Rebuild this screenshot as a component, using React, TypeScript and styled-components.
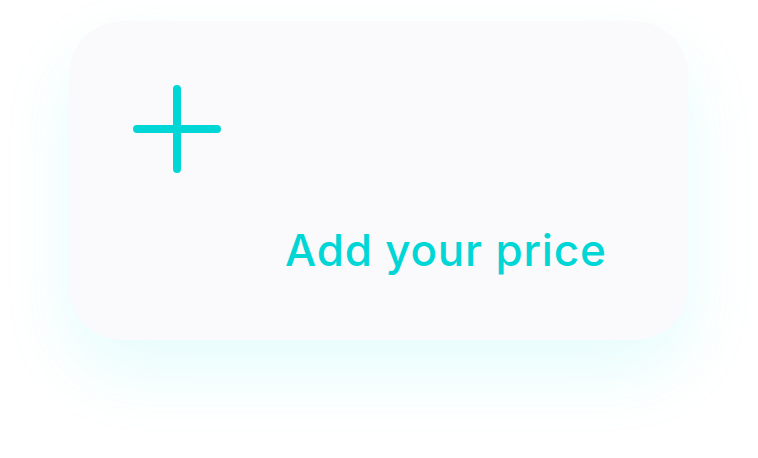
import React from "react";
import styled, { createGlobalStyle } from "styled-components";

const Global = createGlobalStyle`
  html, body { margin: 0; padding: 0; background: #ffffff; }
  body { width: 758px; height: 458px; overflow: hidden; }
`;

const Page = styled.div`
  width: 758px;
  height: 458px;
  box-sizing: border-box;
  padding: 21px 0 0 69px;
`;

const Card = styled.button`
  all: unset;
  box-sizing: border-box;
  width: 619px;
  height: 319px;
  border-radius: 54px;
  background: #faf9fc;
  box-shadow: 0 32px 70px rgba(0, 222, 222, 0.1);
  display: grid;
  grid-template-rows: auto 1fr;
  padding: 64px 0 0 64px;
  cursor: pointer;
`;

const PlusIcon = styled.svg`
  display: block;
  width: 88px;
  height: 88px;
`;

const Label = styled.span`
  justify-self: start;
  margin: 55px 0 0 152px;
  font-family: Inter, "Noto Sans", sans-serif;
  font-size: 44px;
  font-weight: 500;
  letter-spacing: 0.8px;
  color: #00d6d6;
  line-height: 1;
`;

export default function App() {
  return (
    <>
      <Global />
      <Page>
        <Card>
          <PlusIcon viewBox="0 0 88 88" aria-hidden>
            <path
              d="M44 4V84M4 44H84"
              stroke="#00d6d6"
              strokeWidth="8"
              strokeLinecap="round"
              fill="none"
            />
          </PlusIcon>
          <Label>Add your price</Label>
        </Card>
      </Page>
    </>
  );
}
